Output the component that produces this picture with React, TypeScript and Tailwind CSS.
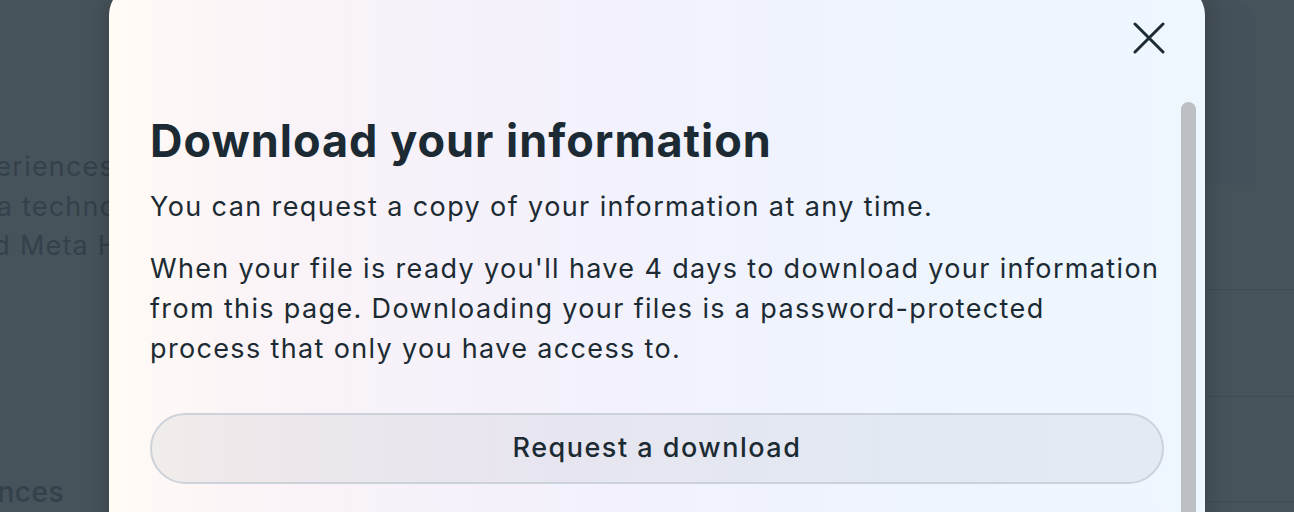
import React from "react";

export default function App() {
  const font = { fontFamily: "Inter, 'Noto Sans', sans-serif" } as React.CSSProperties;
  return (
    <div
      className="relative h-[512px] w-[1294px] overflow-hidden bg-[#47535b] text-[#1c2b33]"
      style={font}
    >
      {/* background page (dimmed) */}
      <div className="flex h-full w-full">
        <div className="flex w-[125px] flex-col text-[27px] leading-[40px] tracking-[1.2px] text-[#34414a]">
          <div className="h-[148px]" />
          <div className="flex justify-end overflow-hidden whitespace-nowrap pr-[10px]">
            <span>experiences</span>
          </div>
          <div className="flex justify-end overflow-hidden whitespace-nowrap pr-[8px]">
            <span>Meta techno</span>
          </div>
          <div className="flex justify-end overflow-hidden whitespace-nowrap pr-[6px]">
            <span>and Meta H</span>
          </div>
          <div className="h-[208px]" />
          <div className="flex w-[64px] justify-end overflow-hidden whitespace-nowrap text-[28px] font-medium tracking-[0.5px]">
            <span>Preferences</span>
          </div>
        </div>
        <div className="flex-1" />
        <div className="flex w-[89px] flex-col">
          <div className="mr-[39px] h-[185px] rounded-tr-[24px] bg-[#45515a]" />
          <div className="h-[105px] border-b border-[#414c54]" />
          <div className="h-[107px] border-b border-[#414c54]" />
          <div className="h-[105px] border-b border-[#414c54]" />
        </div>
      </div>

      {/* modal */}
      <div className="absolute left-[109px] top-[-15px] h-[560px] w-[1096px] overflow-hidden rounded-[30px] bg-[linear-gradient(90deg,#fffbf5_0%,#fbf4f7_12%,#f5f1fb_35%,#f0f3fd_60%,#eef5fd_80%,#eef6fe_100%)] shadow-[0_0_24px_rgba(0,0,0,0.25)]">
        <div className="flex justify-end pr-[40px] pt-[37px]">
          <button className="flex h-[32px] w-[32px] items-center justify-center" aria-label="Close">
            <svg width="32" height="32" viewBox="0 0 32 32" fill="none">
              <path d="M2 2L30 30M30 2L2 30" stroke="#1c2b33" strokeWidth="3" strokeLinecap="round" />
            </svg>
          </button>
        </div>

        <div className="flex flex-col pl-[41px] pr-[41px] pt-[59px]">
          <h1 className="text-[45px] font-bold leading-[56px] tracking-[1px]">
            Download your information
          </h1>
          <p className="mt-[18px] text-[27px] leading-[40px] tracking-[1.4px]">
            You can request a copy of your information at any time.
          </p>
          <p className="mt-[22px] text-[27px] leading-[40px] tracking-[1.35px]">
            When your file is ready you'll have 4 days to download your information
            <br />
            from this page. Downloading your files is a password-protected
            <br />
            process that only you have access to.
          </p>
          <button className="mt-[44px] flex h-[71px] w-full items-center justify-center rounded-full border-2 border-[#cbd2d9] bg-[#1c2b33]/[0.06] text-[27px] font-medium tracking-[1.5px]">
            Request a download
          </button>
        </div>

        <div className="absolute right-[9px] top-[117px] h-[500px] w-[15px] rounded-full bg-[#bcc0c4]" />
      </div>
    </div>
  );
}
